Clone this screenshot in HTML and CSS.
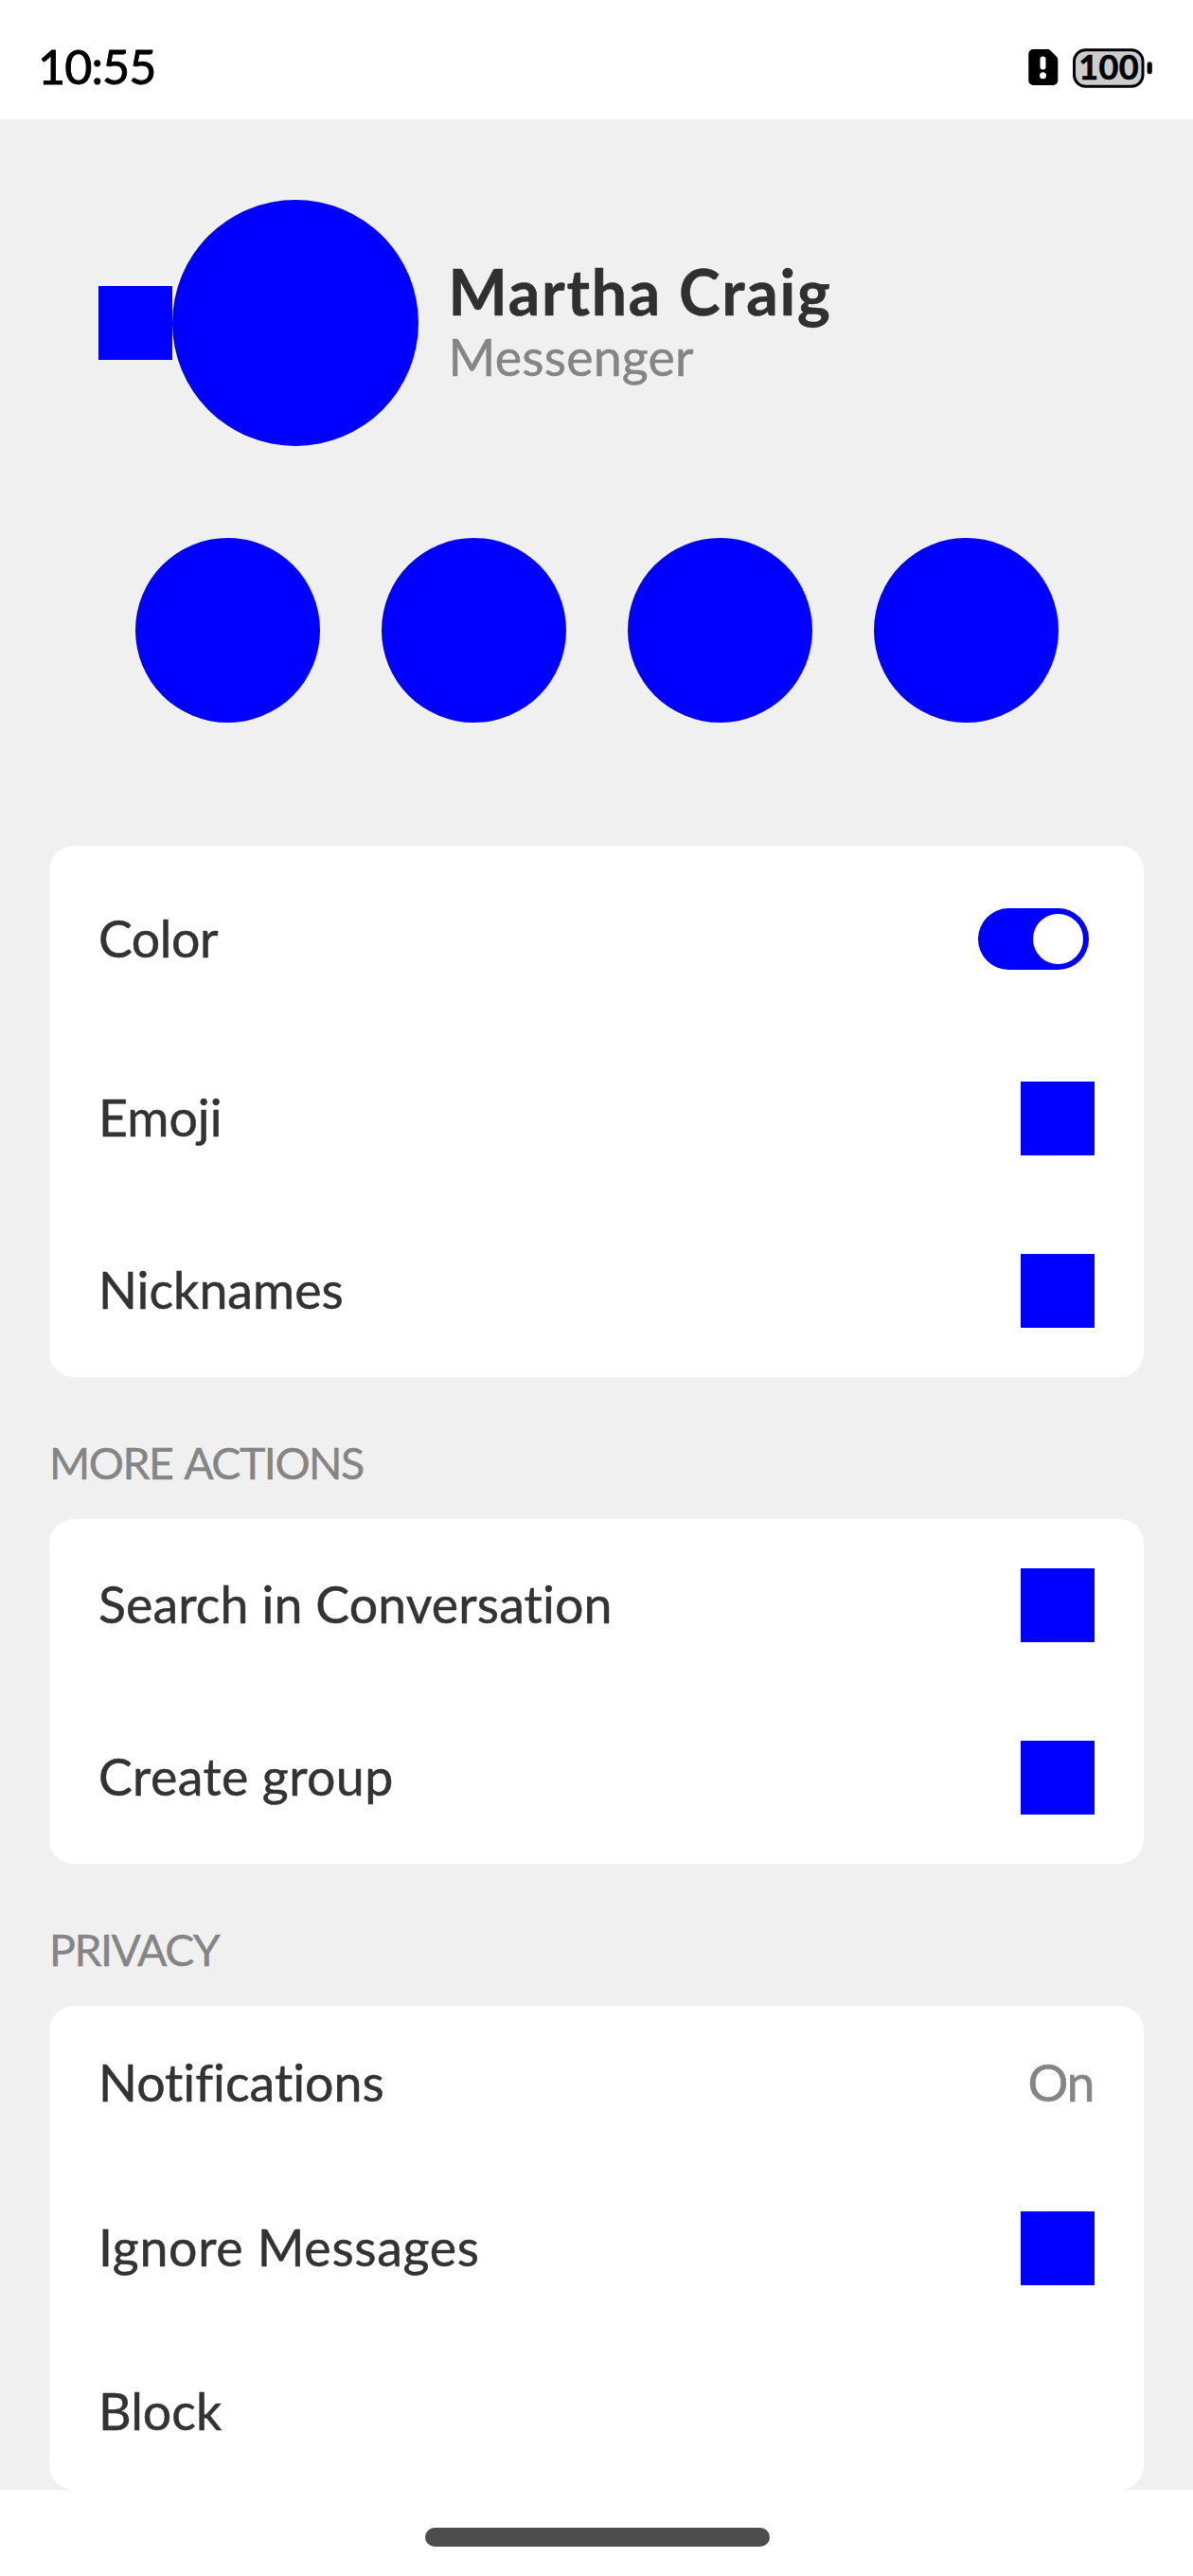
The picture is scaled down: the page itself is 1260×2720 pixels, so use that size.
FILE: index.html
```html
<!DOCTYPE html>
<html lang="en">
<head>
<meta charset="utf-8">
<title>Martha Craig</title>
<link rel="stylesheet" href="styles.css">
</head>
<body>
<header class="status">
  <span class="clock">10:55</span>
  <svg class="status-icons" width="132" height="46" viewBox="0 0 132 46">
    <path d="M5.3 3H20.5a4 4 0 0 1 2.8 1.2L30.1 11a4 4 0 0 1 1.2 2.8V36a5 5 0 0 1-5 5h-21a5 5 0 0 1-5-5V8a5 5 0 0 1 5-5z"/>
    <rect x="12.5" y="10.5" width="6" height="14" rx="3" fill="#fff"/>
    <circle cx="15.5" cy="30.7" r="3.5" fill="#fff"/>
    <rect x="48.5" y="3.7" width="72.5" height="38.6" rx="12" fill="#ccc" stroke="#000" stroke-width="3"/>
    <rect x="125.6" y="16.2" width="5.2" height="13" rx="2.6"/>
    <text class="battery-level" x="53.3" y="35">100</text>
  </svg>
</header>
<main class="screen">
  <section class="profile">
    <span class="box"></span>
    <span class="avatar"></span>
    <div class="who">
      <h1 class="name">Martha Craig</h1>
      <p class="service">Messenger</p>
    </div>
  </section>
  <nav class="actions">
    <span class="action"></span>
    <span class="action"></span>
    <span class="action"></span>
    <span class="action"></span>
  </nav>
  <section class="card">
    <div class="row row-switch"><span class="label tight">Color</span><span class="switch"><span class="knob"></span></span></div>
    <div class="row"><span class="label">Emoji</span><span class="box"></span></div>
    <div class="row"><span class="label">Nicknames</span><span class="box"></span></div>
  </section>
  <h2 class="heading">MORE ACTIONS</h2>
  <section class="card">
    <div class="row"><span class="label long">Search in Conversation</span><span class="box"></span></div>
    <div class="row"><span class="label wide">Create group</span><span class="box"></span></div>
  </section>
  <h2 class="heading">PRIVACY</h2>
  <section class="card">
    <div class="row row-text"><span class="label">Notifications</span><span class="label value">On</span></div>
    <div class="row"><span class="label wider">Ignore Messages</span><span class="box"></span></div>
    <div class="row row-text"><span class="label">Block</span></div>
  </section>
</main>
<footer class="home"><span class="home-bar"></span></footer>
</body>
</html>
```
FILE: styles.css
```css
* { box-sizing: border-box; }

body {
  margin: 0;
  width: 1260px;
  height: 2720px;
  display: flex;
  flex-direction: column;
  background: #fff;
  color: #333;
  font-family: Lato, sans-serif;
  overflow: hidden;
}

.status {
  height: 125.7px;
  padding: 19px 42px 0 40px;
  display: flex;
  justify-content: space-between;
  align-items: center;
  color: #000;
}
.clock {
  padding-bottom: 4px;
  font-size: 50.2px;
  line-height: 60px;
  letter-spacing: -0.9px;
  -webkit-text-stroke: 0.9px;
}
.battery-level { font-size: 36px; font-weight: 700; letter-spacing: 0.3px; stroke: #000; stroke-width: 0.6px; }

.screen {
  height: 2503.3px;
  padding: 85px 52px 0;
  background: #f0f0f0;
}

.profile {
  height: 260px;
  padding-left: 52px;
  display: flex;
  align-items: center;
}
.box { width: 78px; height: 78px; flex: none; background: #00f; }
.avatar { width: 260px; height: 260px; flex: none; border-radius: 50%; background: #00f; }
.who { margin-left: 31.5px; padding-bottom: 5px; }
.name {
  margin: 0;
  font-size: 66px;
  line-height: 76px;
  font-weight: 700;
  letter-spacing: 1.78px;
  color: #303030;
  -webkit-text-stroke: 0.5px;
}
.service {
  margin: 0;
  font-size: 53.7px;
  line-height: 61px;
  letter-spacing: 0.2px;
  color: #858585;
  -webkit-text-stroke: 0.5px;
}

.actions {
  margin: 97px 0 130.6px;
  display: flex;
  justify-content: center;
  gap: 65px;
}
.action { width: 195px; height: 195px; border-radius: 50%; background: #00f; }

.card { padding: 0 52px; border-radius: 26px; background: #fff; }
.row { height: 182px; display: flex; align-items: center; justify-content: space-between; }
.row-switch { height: 196.5px; padding-right: 5.6px; }
.row-text { height: 164.4px; }

.label {
  padding-bottom: 4px;
  font-size: 53.7px;
  line-height: 64px;
  font-variant-ligatures: none;
  -webkit-text-stroke: 0.5px;
}
.tight { letter-spacing: -0.5px; }
.long { letter-spacing: 0.1px; }
.wide { letter-spacing: 0.4px; }
.wider { letter-spacing: 0.67px; }
.value { padding-right: 1px; letter-spacing: -1.5px; color: #858585; }

.switch {
  width: 117px;
  height: 65px;
  padding-right: 6.5px;
  display: flex;
  align-items: center;
  justify-content: flex-end;
  border-radius: 33px;
  background: #00f;
}
.knob { width: 52.5px; height: 52.5px; border-radius: 50%; background: #fff; }

.heading {
  height: 150.2px;
  margin: 0;
  padding-top: 62px;
  font-size: 46.5px;
  line-height: 56px;
  font-weight: 400;
  letter-spacing: -1.5px;
  word-spacing: 3px;
  color: #858585;
  -webkit-text-stroke: 0.4px;
}

.home { flex: 1; padding-top: 39.8px; }
.home-bar { display: block; width: 364px; height: 20px; margin: 0 0 0 449px; border-radius: 10px; background: #4d4d4d; }
```
